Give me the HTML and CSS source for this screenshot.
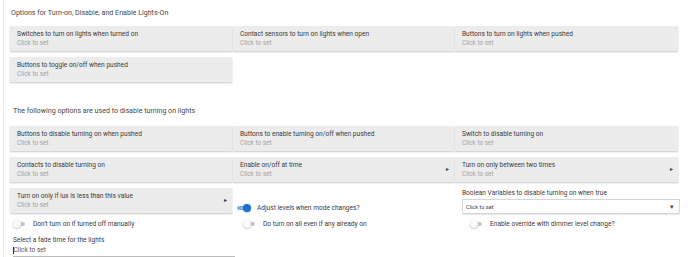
FILE: index.html
```html
<!DOCTYPE html>
<html>
<head>
<meta charset="utf-8">
<link rel="stylesheet" href="styles.css">
</head>
<body>
<div class="page">
  <div class="title t1">Options for Turn-on, Disable, and Enable Lights-On</div>
  <div class="grid">
    <div class="card"><div class="lbl">Switches to turn on lights when turned on</div><div class="sub">Click to set</div></div>
    <div class="card"><div class="lbl">Contact sensors to turn on lights when open</div><div class="sub">Click to set</div></div>
    <div class="card"><div class="lbl">Buttons to turn on lights when pushed</div><div class="sub">Click to set</div></div>
    <div class="card"><div class="lbl">Buttons to toggle on/off when pushed</div><div class="sub">Click to set</div></div>
  </div>

  <div class="title t2">The following options are used to disable turning on lights</div>
  <div class="grid">
    <div class="card"><div class="lbl">Buttons to disable turning on when pushed</div><div class="sub">Click to set</div></div>
    <div class="card"><div class="lbl">Buttons to enable turning on/off when pushed</div><div class="sub">Click to set</div></div>
    <div class="card"><div class="lbl">Switch to disable turning on</div><div class="sub">Click to set</div></div>
    <div class="card"><div class="lbl">Contacts to disable turning on</div><div class="sub">Click to set</div></div>
    <div class="card arrow"><div class="lbl">Enable on/off at time</div><div class="sub">Click to set</div><span class="tri">&#9656;</span></div>
    <div class="card arrow"><div class="lbl">Turn on only between two times</div><div class="sub">Click to set</div><span class="tri">&#9656;</span></div>
    <div class="card arrow"><div class="lbl">Turn on only if lux is less than this value</div><div class="sub">Click to set</div><span class="tri">&#9656;</span></div>
    <div class="cell toggle-cell c2a"><span class="sw on"><span class="knob"></span></span><span class="sw-text">Adjust levels when mode changes?</span></div>
    <div class="cell sel-cell">
      <div class="sel-label">Boolean Variables to disable turning on when true</div>
      <div class="select"><span>Click to set</span><span class="dd">&#9662;</span></div>
    </div>
    <div class="cell toggle-cell row2 c1"><span class="sw"><span class="knob"></span></span><span class="sw-text">Don't turn on if turned off manually</span></div>
    <div class="cell toggle-cell row2 c2"><span class="sw"><span class="knob"></span></span><span class="sw-text">Do turn on all even if any already on</span></div>
    <div class="cell toggle-cell row2 c3"><span class="sw"><span class="knob"></span></span><span class="sw-text">Enable override with dimmer level change?</span></div>
  </div>

  <div class="fade">
    <div class="fade-label">Select a fade time for the lights</div>
    <div class="fade-input"><span class="caret"></span>Click to set</div>
  </div>
</div>
</body>
</html>
```

FILE: styles.css
```css
* { box-sizing: border-box; }
html, body { margin: 0; padding: 0; background: #fff; }
body {
  font-family: Roboto, "Liberation Sans", sans-serif;
  color: #333;
  overflow: hidden;
  height: 257px;
}
.page {
  margin-left: 3px;
  border-left: 1px solid #ececec;
  padding-left: 6px;
  min-height: 257px;
}
.title {
  font-size: 7.1px;
  color: #484848;
  line-height: 9px;
}
.t1 { padding: 8px 0 0 1px; height: 26px; }
.t2 { padding: 24px 0 0 3px; margin-bottom: 11px; }
.grid {
  display: grid;
  grid-template-columns: 222px 221px 223px;
  column-gap: 1px;
  row-gap: 6px;
}
.card {
  position: relative;
  background: #ececec;
  height: 25px;
  padding: 4px 0 0 7px;
  box-shadow: 0 1px 1.5px rgba(0,0,0,0.22);
}
.lbl { font-size: 6.6px; line-height: 8.5px; color: #3a3a3a; }
.sub { font-size: 6.4px; line-height: 8.5px; color: #a3a3a3; }
.tri {
  position: absolute;
  right: 5px;
  top: 8px;
  font-size: 6px;
  color: #333;
}
.cell { display: flex; }
.toggle-cell { align-items: center; }
.c2a { align-self: end; padding-left: 4px; height: 10px; margin-bottom: 1px; }
.row2 { height: 10px; margin-top: -1px; }
.c1 { padding-left: 3px; }
.c2 { padding-left: 10px; }
.c3 { padding-left: 15px; }
.sw {
  position: relative;
  width: 13px;
  height: 9px;
  flex: none;
}
.sw::before {
  content: "";
  position: absolute;
  left: 3px;
  top: 2.5px;
  width: 9px;
  height: 4px;
  border-radius: 2px;
  background: #c8c8c8;
}
.sw .knob {
  position: absolute;
  left: 0;
  top: 0.5px;
  width: 8px;
  height: 8px;
  border-radius: 50%;
  background: #fafafa;
  box-shadow: 0 0.5px 1.5px rgba(0,0,0,0.35);
}
.sw.on::before { background: #7fb1e6; left: 0; }
.sw.on .knob { left: 6px; background: #1a73d4; }
.sw-text { font-size: 6.6px; color: #3a3a3a; margin-left: 7px; line-height: 9px; }
.sel-cell { flex-direction: column; padding-left: 7px; padding-top: 1px; }
.sel-label { font-size: 6.6px; line-height: 8px; color: #3a3a3a; margin-bottom: 2px; }
.select {
  width: 218px;
  height: 15px;
  border: 1px solid #d6d6d6;
  border-radius: 1px;
  box-shadow: 0 0.5px 1px rgba(0,0,0,0.1);
  display: flex;
  align-items: center;
  justify-content: space-between;
  padding: 0 5px 0 3px;
  font-size: 5.6px;
  color: #444;
}
.dd { font-size: 7px; color: #444; }
.fade { padding-left: 3px; margin-top: 7px; }
.fade-label { font-size: 6.6px; line-height: 9px; color: #3a3a3a; }
.fade-input {
  width: 222px;
  font-size: 6.6px;
  line-height: 9px;
  color: #555;
  padding-top: 1px;
  padding-bottom: 1px;
  border-bottom: 1px solid #bbb;
  display: flex;
  align-items: center;
}
.caret {
  display: inline-block;
  width: 0.5px;
  height: 7px;
  background: #333;
}
```
